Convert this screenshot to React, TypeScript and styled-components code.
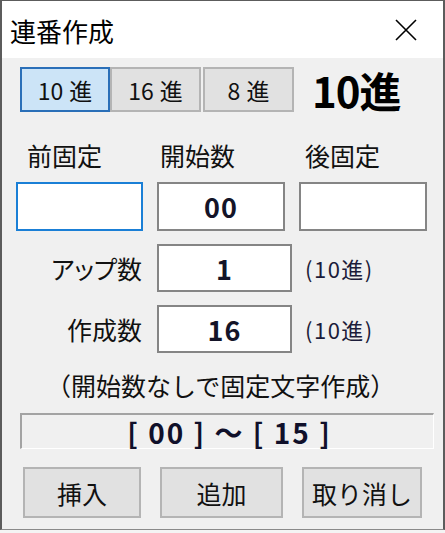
import React from "react";
import styled, { createGlobalStyle } from "styled-components";

const Global = createGlobalStyle`
  html, body { margin: 0; padding: 0; background: #f4f4f4; }
  body { font-family: "Noto Sans CJK JP", "Noto Sans", sans-serif; color: #000; }
  * { box-sizing: border-box; }
`;

const Window = styled.div`
  width: 445px;
  height: 530px;
  display: flex;
  flex-direction: column;
  border-left: 2px solid #5c5c5c;
  border-right: 2px solid #5c5c5c;
  border-top: 1px solid #5c5c5c;
  border-bottom: 1px solid #8a8a8a;
  background: #f0f0f0;
`;

const TitleBar = styled.div`
  height: 57px;
  flex: none;
  background: #ffffff;
  display: flex;
  align-items: center;
  justify-content: space-between;
  padding: 0 26px 0 8px;
`;

const Title = styled.div`
  font-size: 26px;
  line-height: 30px;
  padding-top: 2px;
  color: #000;
`;

const Body = styled.div`
  flex: 1;
  display: flex;
  flex-direction: column;
  align-items: flex-start;
  padding: 9px 0 0 14px;
`;

const RadioRow = styled.div`
  display: flex;
  align-items: center;
  margin-left: 4px;
  height: 45px;
`;

const RadioButton = styled.div<{ $selected?: boolean; $w: number; $ml?: number }>`
  width: ${(p) => p.$w}px;
  height: 45px;
  margin-left: ${(p) => p.$ml ?? 0}px;
  display: flex;
  align-items: center;
  justify-content: center;
  gap: 6px;
  font-size: 23px;
  line-height: 26px;
  background: ${(p) => (p.$selected ? "#cce4f7" : "#e1e1e1")};
  border: 2px solid ${(p) => (p.$selected ? "#2a6fb8" : "#b4b4b4")};
  color: #111;
`;

const BigLabel = styled.div`
  margin-left: 18px;
  font-size: 42px;
  font-weight: 700;
  line-height: 44px;
  letter-spacing: -1px;
  color: #000;
`;

const TopGrid = styled.div`
  display: grid;
  grid-template-columns: 127px 128px 128px;
  column-gap: 14px;
  row-gap: 12px;
  margin-top: 28px;
`;

const ColLabel = styled.div<{ $pl: number }>`
  padding-left: ${(p) => p.$pl}px;
  font-size: 25px;
  line-height: 30px;
  color: #111;
`;

const TextBox = styled.div<{ $focus?: boolean; $h?: number }>`
  height: ${(p) => p.$h ?? 49}px;
  background: #fff;
  border: 2px solid ${(p) => (p.$focus ? "#1a7fd6" : "#858585")};
  display: flex;
  align-items: center;
  justify-content: center;
  font-size: 27px;
  font-weight: 700;
  letter-spacing: 1px;
  color: #141428;
`;

const FieldRow = styled.div<{ $mt: number }>`
  display: flex;
  align-items: center;
  margin-top: ${(p) => p.$mt}px;
`;

const FieldLabel = styled.div`
  width: 126px;
  text-align: right;
  font-size: 25px;
  line-height: 30px;
  font-feature-settings: "palt";
  color: #111;
`;

const FieldBox = styled(TextBox)`
  width: 135px;
  margin-left: 15px;
`;

const Suffix = styled.div`
  margin-left: 13px;
  font-size: 22px;
  line-height: 26px;
  letter-spacing: 1.5px;
  color: #1c1c3a;
`;

const Note = styled.div`
  margin-top: 17px;
  margin-left: 30px;
  font-size: 25px;
  line-height: 30px;
  color: #111;
`;

const ResultBox = styled.div`
  margin-top: 13px;
  margin-left: 4px;
  width: 414px;
  height: 36px;
  border-top: 2px solid #a3a3a3;
  border-left: 2px solid #a3a3a3;
  border-bottom: 1px solid #fff;
  border-right: 1px solid #fff;
  display: flex;
  align-items: center;
  justify-content: center;
  padding-left: 4px;
  font-size: 28px;
  font-weight: 700;
  line-height: 30px;
  letter-spacing: 2px;
  color: #10102a;
`;

const ButtonRow = styled.div`
  display: flex;
  margin-top: 18px;
  margin-left: 7px;
  gap: 19px;
`;

const ActionButton = styled.div<{ $w: number }>`
  width: ${(p) => p.$w}px;
  height: 51px;
  background: #e1e1e1;
  border: 2px solid #b4b4b4;
  display: flex;
  align-items: center;
  justify-content: center;
  font-size: 25px;
  line-height: 30px;
  color: #111;
`;

const CloseIcon = () => (
  <svg width="22" height="22" viewBox="0 0 22 22">
    <path d="M1 1 L21 21 M21 1 L1 21" stroke="#000" strokeWidth="1.6" fill="none" />
  </svg>
);

export default function App() {
  return (
    <>
      <Global />
      <Window>
        <TitleBar>
          <Title>連番作成</Title>
          <CloseIcon />
        </TitleBar>
        <Body>
          <RadioRow>
            <RadioButton $selected $w={90}>
              <span>10</span>
              <span>進</span>
            </RadioButton>
            <RadioButton $w={91}>
              <span>16</span>
              <span>進</span>
            </RadioButton>
            <RadioButton $w={91} $ml={2}>
              <span>8</span>
              <span>進</span>
            </RadioButton>
            <BigLabel>10進</BigLabel>
          </RadioRow>
          <TopGrid>
            <ColLabel $pl={11}>前固定</ColLabel>
            <ColLabel $pl={3}>開始数</ColLabel>
            <ColLabel $pl={6}>後固定</ColLabel>
            <TextBox $focus />
            <TextBox>00</TextBox>
            <TextBox />
          </TopGrid>
          <FieldRow $mt={13}>
            <FieldLabel>アップ数</FieldLabel>
            <FieldBox $h={48}>1</FieldBox>
            <Suffix>(10進)</Suffix>
          </FieldRow>
          <FieldRow $mt={13}>
            <FieldLabel>作成数</FieldLabel>
            <FieldBox $h={48}>16</FieldBox>
            <Suffix>(10進)</Suffix>
          </FieldRow>
          <Note>（開始数なしで固定文字作成）</Note>
          <ResultBox>[ 00 ] ～ [ 15 ]</ResultBox>
          <ButtonRow>
            <ActionButton $w={118}>挿入</ActionButton>
            <ActionButton $w={123}>追加</ActionButton>
            <ActionButton $w={120}>取り消し</ActionButton>
          </ButtonRow>
        </Body>
      </Window>
    </>
  );
}
